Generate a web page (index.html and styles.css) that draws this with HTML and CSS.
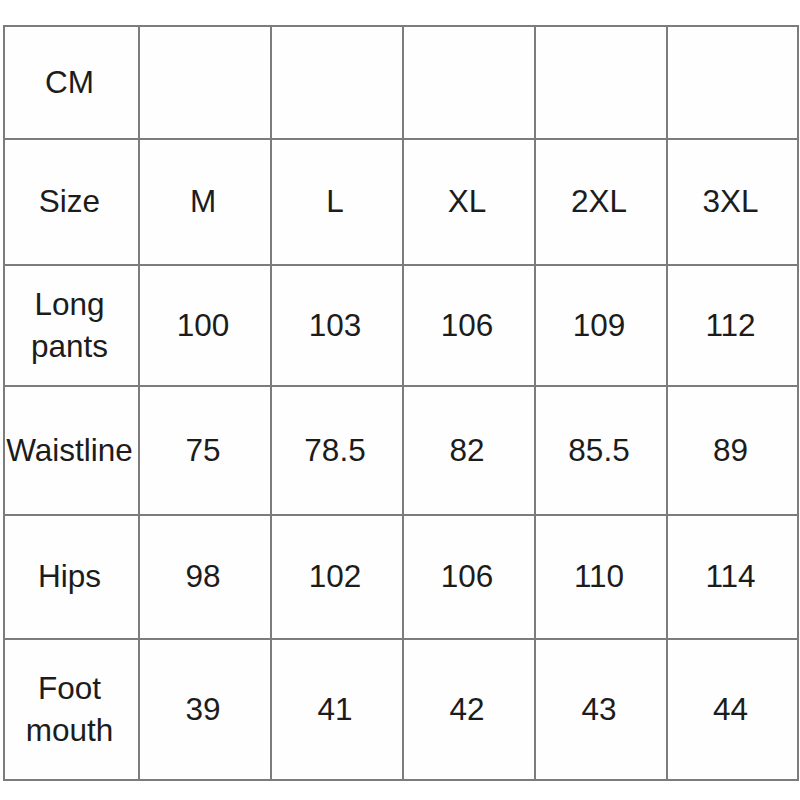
FILE: index.html
```html
<!DOCTYPE html>
<html>
<head>
<meta charset="utf-8">
<link rel="stylesheet" href="styles.css">
</head>
<body>
<div class="chart">
  <div class="cell">CM</div><div class="cell"></div><div class="cell"></div><div class="cell"></div><div class="cell"></div><div class="cell"></div>
  <div class="cell">Size</div><div class="cell">M</div><div class="cell">L</div><div class="cell">XL</div><div class="cell">2XL</div><div class="cell">3XL</div>
  <div class="cell">Long<br>pants</div><div class="cell">100</div><div class="cell">103</div><div class="cell">106</div><div class="cell">109</div><div class="cell">112</div>
  <div class="cell">Waistline</div><div class="cell">75</div><div class="cell">78.5</div><div class="cell">82</div><div class="cell">85.5</div><div class="cell">89</div>
  <div class="cell">Hips</div><div class="cell">98</div><div class="cell">102</div><div class="cell">106</div><div class="cell">110</div><div class="cell">114</div>
  <div class="cell">Foot<br>mouth</div><div class="cell">39</div><div class="cell">41</div><div class="cell">42</div><div class="cell">43</div><div class="cell">44</div>
</div>
</body>
</html>
```

FILE: styles.css
```css
html, body {
  margin: 0;
  padding: 0;
  background: #ffffff;
}
body {
  padding: 25px 0 0 3px;
  font-family: "Liberation Sans", Arial, sans-serif;
}
.chart {
  display: grid;
  width: max-content;
  grid-template-columns: 133px 130px 130px 130px 130px 129px;
  grid-template-rows: 111px 124px 119px 127px 122px 139px;
  gap: 2px;
  padding: 2px;
  background: #7c7c7a;
}
.cell {
  background: #fefefe;
  display: flex;
  align-items: center;
  justify-content: center;
  text-align: center;
  font-size: 31.5px;
  line-height: 42px;
  color: #1c1c1c;
  white-space: nowrap;
  padding: 0 4px 2px 0;
}
```
